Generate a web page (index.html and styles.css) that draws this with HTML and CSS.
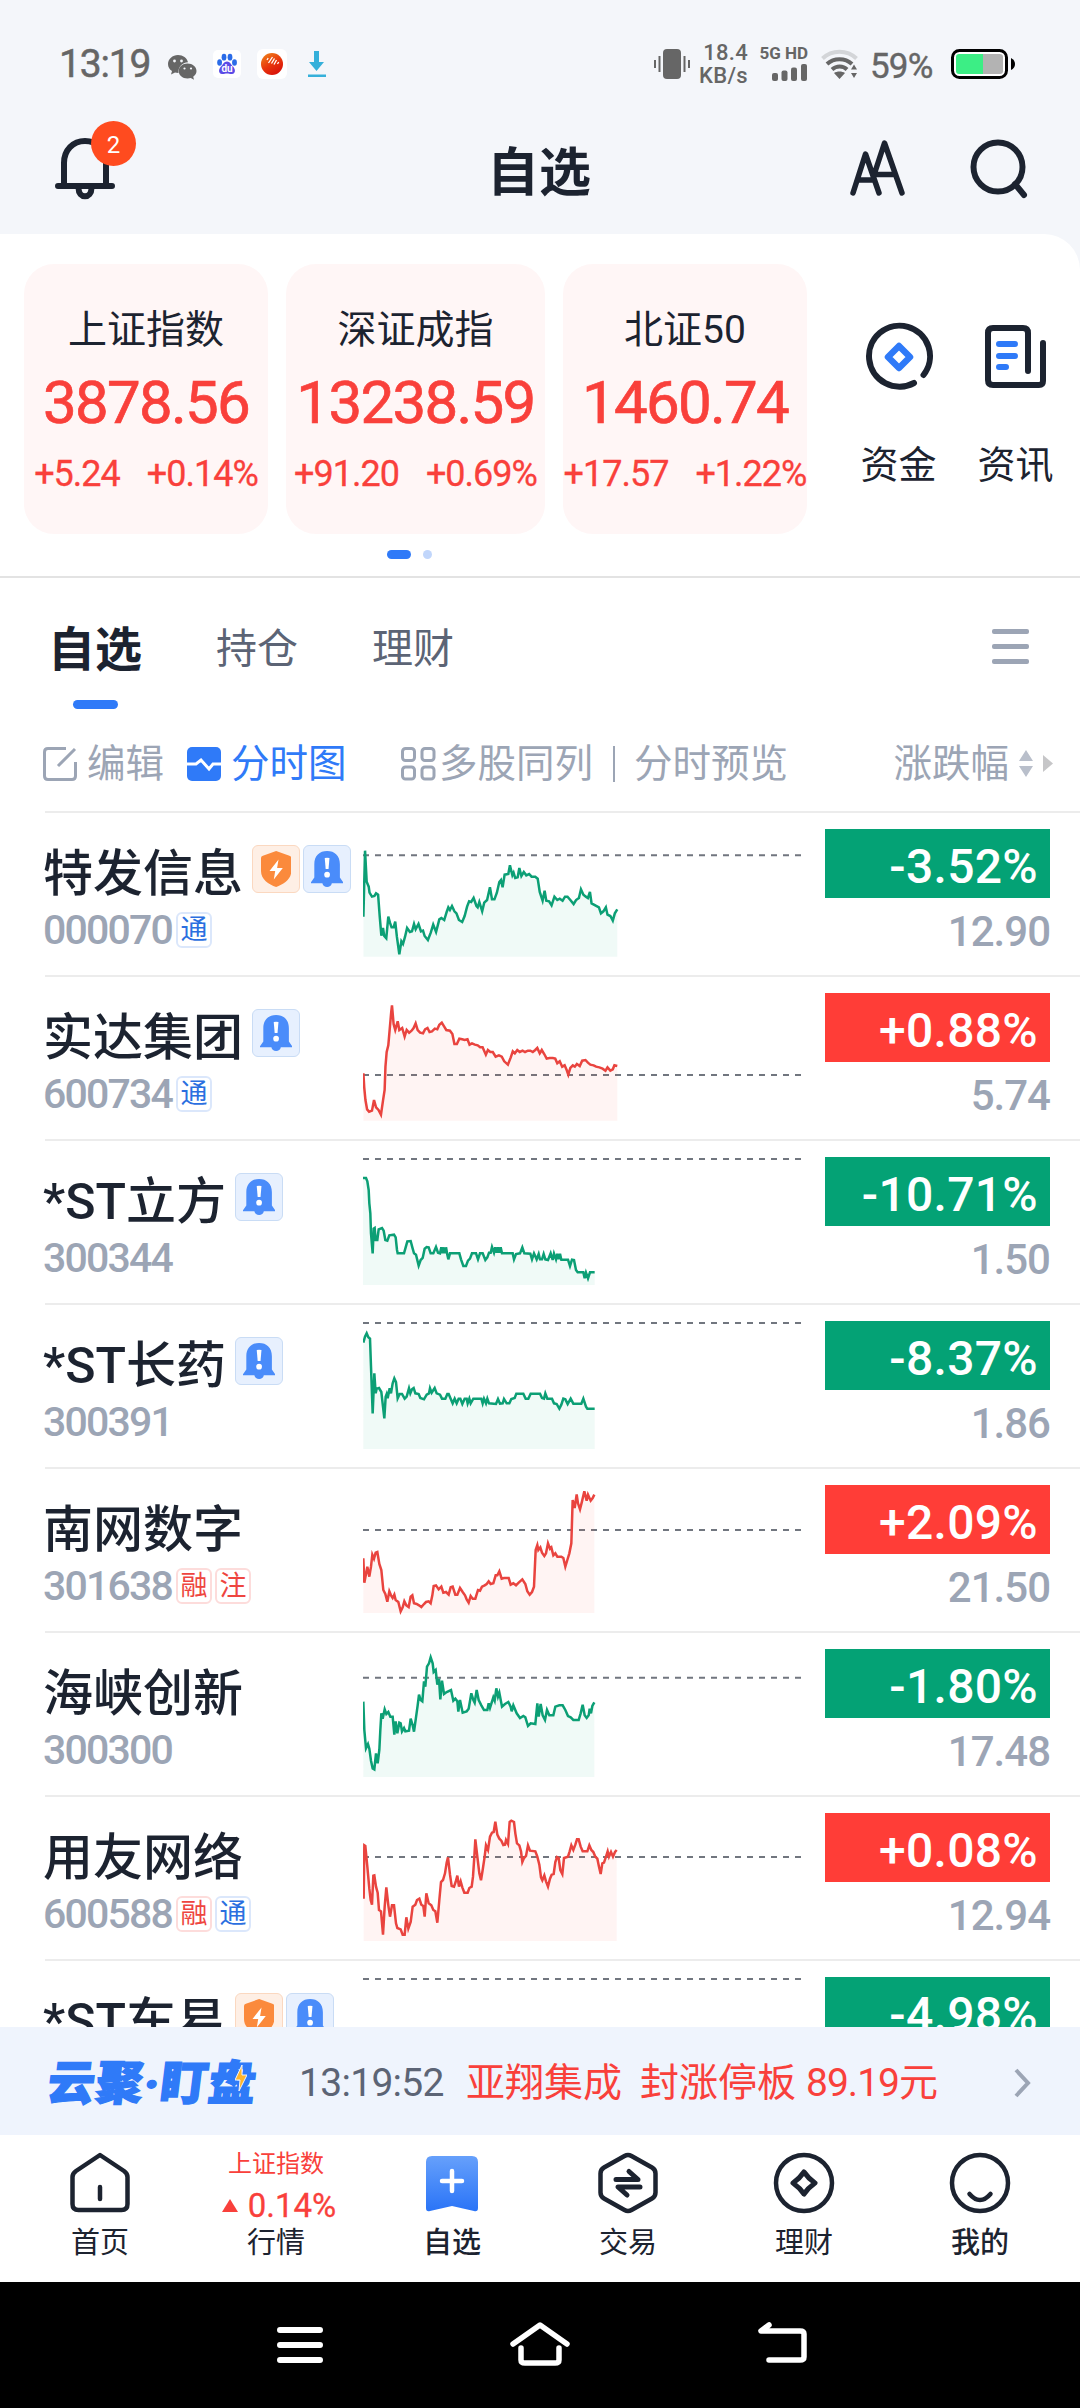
FILE: index.html
```html
<!DOCTYPE html>
<html lang="zh-CN">
<head>
    <meta charset="UTF-8">
    <meta name="viewport" content="width=device-width, initial-scale=1.0">
    <title>自选</title>
    <link rel="stylesheet" href="styles.css">
</head>
<body>
    <div class="status">
        <span class="clock">13:19</span>
        <svg class="wechat" width="30" height="26" viewBox="0 0 30 26">
            <path fill="#666" d="M10 1C4.500 1 0 5 0 10c0 3 1.500 5.500 4 7l-1 3.500 4-2c1 .3 2 .4 3.500.4C10 13 14 8.500 20 8.300 19 4 15 1 10 1z"/>
            <path fill="#666" d="M19.500 9.500c-5 0-8.800 3.400-8.800 7.500s3.800 7.500 8.800 7.500c1.200 0 2.300-.2 3.300-.5l3.200 1.800-.8-3c2-1.400 3.300-3.500 3.300-5.800 0-4.100-4-7.500-9-7.500z"/>
            <g fill="#f4f6fa"><circle cx="6.500" cy="7" r="1.400"/><circle cx="13.500" cy="7" r="1.400"/><circle cx="16.500" cy="14.500" r="1.100"/><circle cx="23" cy="14.500" r="1.100"/></g>
        </svg>
        <svg class="baidu" width="28" height="28" viewBox="0 0 28 28">
            <rect width="28" height="28" rx="5" fill="#fff"/>
            <g fill="#2b6ce8"><ellipse cx="6.600" cy="12.500" rx="2.400" ry="3.200"/><ellipse cx="11" cy="7.200" rx="2.400" ry="3.400"/><ellipse cx="17" cy="7.200" rx="2.400" ry="3.400"/><ellipse cx="21.500" cy="12.500" rx="2.400" ry="3.200"/></g>
            <path fill="#5b4be6" d="M14 11.500c3 0 4 3 6 5 2.500 2.500 3 7-1 7.500-2 .2-3-.5-5-.5s-3 .7-5 .5c-4-.5-3.500-5-1-7.500 2-2 3-5 6-5z"/>
            <text x="14" y="22" class="du">du</text>
        </svg>
        <svg class="cmb" width="30" height="30" viewBox="0 0 30 30">
            <defs><linearGradient id="ball" x1="0" y1="0" x2=".6" y2="1"><stop offset="0" stop-color="#f08a1c"/><stop offset=".6" stop-color="#e8350c"/><stop offset="1" stop-color="#d9140a"/></linearGradient></defs>
            <rect width="30" height="30" rx="6" fill="#fff"/>
            <circle cx="15" cy="15" r="11" fill="url(#ball)"/>
            <path stroke="#fff" stroke-width="1.300" d="M10 11l1.200-2M11.500 14l4-6M14.500 14.500l3-5M17 15.500l2.500-4.500M20.500 15l1.200-2"/>
        </svg>
        <svg class="down-icon" width="20" height="28" viewBox="0 0 20 28">
            <path fill="#35b0da" d="M7 1h5v11h5L9.500 21 2 12h5zM1 24.500h18v2.500H1z"/>
        </svg>

        <svg class="vibrate" width="36" height="30" viewBox="0 0 36 30">
            <rect x="9" width="18" height="30" rx="4" fill="#666"/>
            <path stroke="#666" stroke-width="2" d="M1 11v8M5.500 7v16M30.500 7v16M35 11v8"/>
        </svg>
        <div class="speed"><span>18.4</span><span>KB/s</span></div>
        <div class="signal">
            <span>5G HD</span>
            <svg width="36" height="18" viewBox="0 0 36 18"><g fill="#666"><rect y="9" width="6" height="8" rx="2"/><rect x="9.500" y="6.500" width="6" height="10.500" rx="2"/><rect x="19" y="3.500" width="6" height="13.500" rx="2"/><rect x="29" y="0" width="6" height="17" rx="2"/></g></svg>
        </div>
        <svg class="wifi" width="38" height="30" viewBox="0 0 38 30">
            <g fill="none" stroke="#666" stroke-width="4">
                <path stroke="#d3d5d8" d="M1.500 9.500C11 .5 26 .5 35.500 9.500"/>
                <path d="M6 15C13 8.500 24 8.500 31 15"/>
                <path d="M11 20.500c4.500-4 11-4 15 0"/>
            </g>
            <path fill="#666" d="M13 24c3-2 8-2 11 0l-5.500 6zM30 20.500l3-5 3 5zM30 24l3 5 3-5z"/>
        </svg>
        <span class="percent">59%</span>
        <svg class="battery" width="65" height="30" viewBox="0 0 65 30">
            <rect x="1.500" y="1.500" width="54" height="27" rx="7" fill="#fff" stroke="#000" stroke-width="3"/>
            <path fill="#3cee85" d="M8 5h24v20H8q-3 0-3-3V8q0-3 3-3z"/>
            <path fill="#b3b3b3" d="M32 5h17q3 0 3 3v14q0 3-3 3H32z"/>
            <path d="M60 9q4 2 4 6t-4 6z"/>
        </svg>
    </div>

    <header class="header">
        <div class="bell">
            <svg width="60" height="62" viewBox="0 0 60 62" fill="none" stroke="#1c2330" stroke-width="6" stroke-linecap="round">
                <path d="M9 47V25C9 12 18 3 30 3s21 9 21 22v22M3 48h54"/>
                <path d="M23.500 50c0 11 13 11 13 0"/>
            </svg>
            <span class="badge">2</span>
        </div>
        <h1>自选</h1>
        <svg class="font-size" width="56" height="58" viewBox="0 0 56 58" fill="none" stroke="#1c2330" stroke-width="5.500" stroke-linecap="round" stroke-linejoin="round">
            <path d="M3 54L15.500 15 29 54M9 41h15M24 36L34.500 4 52 54M25 35.500h20"/>
        </svg>
        <svg class="search" width="62" height="62" viewBox="0 0 62 62" fill="none" stroke="#1c2330" stroke-width="6" stroke-linecap="round">
            <circle cx="30" cy="30" r="24.500"/><path d="M47 47l9 11"/>
        </svg>
    </header>

    <main class="panel">
        <section class="indexes">
            <div class="card">
                <span class="card-name">上证指数</span>
                <span class="card-value">3878.56</span>
                <span class="card-change"><span>+5.24</span><span>+0.14%</span></span>
            </div>
            <div class="card card-wide">
                <span class="card-name">深证成指</span>
                <span class="card-value">13238.59</span>
                <span class="card-change"><span>+91.20</span><span>+0.69%</span></span>
            </div>
            <div class="card">
                <span class="card-name">北证50</span>
                <span class="card-value">1460.74</span>
                <span class="card-change"><span>+17.57</span><span>+1.22%</span></span>
            </div>
            <div class="shortcut">
                <svg width="70" height="70" viewBox="0 0 70 70" fill="none" stroke-width="6" stroke-linecap="round">
                    <path stroke="#1c2330" d="M50 61A30.500 30.500 0 1 1 59.500 53"/>
                    <path stroke="#2f7af8" stroke-width="6.500" stroke-linejoin="round" d="M35 24l11 11-11 11-11-11z"/>
                </svg>
                <span>资金</span>
            </div>
            <div class="shortcut">
                <svg width="70" height="70" viewBox="0 0 70 70" fill="none" stroke-width="6" stroke-linecap="round">
                    <path stroke="#1c2330" d="M47 49V11q0-5-5-5H12q-5 0-5 5v47q0 5 5 5h46q4 0 4-4V21"/>
                    <path stroke="#2f7af8" d="M18 22h16M18 34h16M18 45h7"/>
                </svg>
                <span>资讯</span>
            </div>
        </section>
        <div class="dots"><i class="on"></i><i></i></div>

        <nav class="tabs">
            <a class="active">自选</a>
            <a>持仓</a>
            <a>理财</a>
            <span class="menu"><i></i><i></i><i></i></span>
        </nav>

        <div class="toolbar">
            <svg width="34" height="34" viewBox="0 0 34 34" fill="none" stroke="#9ca5b5" stroke-width="3">
                <path d="M23 1.500H5q-3.500 0-3.500 3.500v24q0 3.500 3.500 3.500h24q3.500 0 3.500-3.500V15M15 19L32 2"/>
            </svg>
            <span class="edit">编辑</span>
            <svg width="34" height="34" viewBox="0 0 34 34">
                <rect width="34" height="34" rx="5" fill="#2f7af8"/>
                <path fill="none" stroke="#fff" stroke-width="3" d="M0 17h9l5-4 8 9 4-5h8"/>
            </svg>
            <span class="minute">分时图</span>
            <svg width="35" height="34" viewBox="0 0 35 34" fill="none" stroke="#9ca5b5" stroke-width="3">
                <rect x="1.500" y="1.500" width="12" height="12" rx="3"/><rect x="21" y="1.500" width="12" height="12" rx="3"/>
                <rect x="1.500" y="20" width="12" height="12" rx="3"/><rect x="21" y="20" width="12" height="12" rx="3"/>
            </svg>
            <span class="multi">多股同列</span>
            <i class="split"></i>
            <span>分时预览</span>
            <span class="sort">涨跌幅</span>
            <svg class="arrows" width="36" height="28" viewBox="0 0 36 28">
                <path fill="#b9bfcb" d="M1 11L8 0l7 11zM1 16l7 11 7-11z"/><path fill="#c6c6c8" d="M25 5v17l10-8.500z"/>
            </svg>
        </div>

        <div class="list" id="stockList">
            <!-- Rows will be populated here -->
        </div>
    </main>

    <div class="ticker">
        <span class="logo"><b>云聚·盯盘</b><svg width="12" height="26" viewBox="0 0 12 26"><path fill="#ffb52b" stroke="#eff4fd" stroke-width="1" d="M7 0L0 15h5L4 26l8-16H7z"/></svg></span>
        <span class="time">13:19:52</span>
        <span class="news">亚翔集成</span>
        <span class="news">封涨停板</span>
        <span class="news deal">89.19元</span>
        <svg width="18" height="30" viewBox="0 0 18 30" fill="none" stroke="#9ca5b5" stroke-width="4"><path d="M2 2l12 13L2 28"/></svg>
    </div>

    <nav class="bottom-nav">
        <a>
            <svg width="64" height="64" viewBox="0 0 64 64" fill="none" stroke="#1c2330" stroke-width="4.500" stroke-linecap="round" stroke-linejoin="round">
                <path d="M32 4L8 20q-3.500 2.500-3.500 6v27q0 6 6 6h43q6 0 6-6V26q0-3.500-3.500-6zM32 36v12"/>
            </svg>
            <span>首页</span>
        </a>
        <a class="market">
            <div class="mini"><b>上证指数</b><em><svg width="16" height="13" viewBox="0 0 16 13"><path fill="#f9403b" d="M8 0l8 13H0z"/></svg>0.14%</em></div>
            <span>行情</span>
        </a>
        <a class="selected">
            <svg width="64" height="64" viewBox="0 0 64 64">
                <defs><linearGradient id="mark" x1="0" y1="0" x2="0" y2="1"><stop offset="0" stop-color="#66a0fb"/><stop offset="1" stop-color="#2a74f7"/></linearGradient></defs>
                <path fill="url(#mark)" d="M12 5h40q6 0 6 6v46q0 4-4 3L32 55 10 60q-4 1-4-3V11q0-6 6-6z"/>
                <path stroke="#fff" stroke-width="4.500" stroke-linecap="round" d="M32 20v20M22 30h20"/>
            </svg>
            <span>自选</span>
        </a>
        <a>
            <svg width="64" height="64" viewBox="0 0 64 64" fill="none" stroke="#1c2330" stroke-width="4.500" stroke-linecap="round" stroke-linejoin="round">
                <path d="M28.500 5q3.500-2 7 0L56 16.500q3.500 2 3.500 6v19q0 4-3.500 6L35.500 59q-3.500 2-7 0L8 47.500q-3.500-2-3.500-6v-19q0-4 3.500-6z"/>
                <path stroke-width="5" d="M20 28.500h22l-9-8M44 36H22l9 8"/>
            </svg>
            <span>交易</span>
        </a>
        <a>
            <svg width="64" height="64" viewBox="0 0 64 64" fill="none" stroke="#1c2330" stroke-width="4.500" stroke-linejoin="round">
                <circle cx="32" cy="32" r="28"/><path stroke-width="5" d="M32 21q4 6 11 11-7 5-11 11-4-6-11-11 7-5 11-11z"/>
            </svg>
            <span>理财</span>
        </a>
        <a class="mine">
            <svg width="64" height="64" viewBox="0 0 64 64" fill="none" stroke="#1c2330" stroke-width="4.500" stroke-linecap="round">
                <circle cx="32" cy="32" r="28"/><path d="M21.500 43q10.500 12 21 0"/>
            </svg>
            <span>我的</span>
        </a>
    </nav>

    <div class="system-nav">
        <svg width="46" height="48" viewBox="0 0 46 48" stroke="#fff" stroke-width="6" stroke-linecap="round"><path d="M3 10h40M3 25h40M3 40h40"/></svg>
        <svg width="60" height="48" viewBox="0 0 60 48" fill="none" stroke="#fff" stroke-width="5.500" stroke-linecap="round" stroke-linejoin="round"><path d="M3 24L30 5l27 19"/><path d="M11 28v12q0 3 4 3h30q4 0 4-3V28"/></svg>
        <svg width="50" height="48" viewBox="0 0 50 48" fill="none" stroke="#fff" stroke-width="5.500" stroke-linecap="round" stroke-linejoin="round"><path d="M12 5L4 11h39q4 0 4 3v23q0 3-4 3H12"/></svg>
    </div>

    <script>
        // box: viewBox of the chart, base: yesterday's close line, bottom: bottom of the filled area
        const stocks = [
            { name: '特发信息', code: '000070', marks: ['shield', 'alarm'], tags: ['通'], change: '-3.52%', price: '12.90',
              box: '889 39 1078 486', base: 166, bottom: 470,
              points: '890,350 894,152 898,245 903,260 905,278 911,290 917,288 921,280 926,284 930,350 934,407 938,384 941,408 946,415 951,350 955,368 959,382 964,382 968,365 972,410 978,463 983,424 987,432 992,410 997,384 1004,396 1009,394 1014,372 1018,388 1025,372 1031,394 1036,392 1040,408 1048,420 1055,398 1061,374 1068,396 1076,358 1081,354 1088,360 1094,336 1098,322 1102,330 1107,318 1113,334 1118,340 1124,360 1132,366 1138,348 1144,320 1149,304 1154,306 1160,294 1167,318 1170,322 1174,306 1181,334 1186,308 1193,300 1200,262 1205,298 1211,298 1217,278 1223,246 1227,240 1231,262 1236,224 1245,222 1249,196 1255,226 1258,218 1262,234 1268,232 1272,204 1277,228 1283,216 1289,226 1296,222 1302,230 1311,230 1317,236 1322,276 1329,302 1334,272 1338,302 1345,304 1351,316 1358,290 1365,300 1371,296 1378,302 1384,290 1390,290 1397,300 1405,312 1411,300 1418,294 1423,268 1429,284 1435,290 1440,294 1445,276 1449,310 1458,316 1467,322 1472,340 1478,334 1484,322 1488,344 1495,348 1501,362 1506,340 1512,328' },
            { name: '实达集团', code: '600734', marks: ['alarm'], tags: ['通'], change: '+0.88%', price: '5.74',
              box: '889 531 1078 486', base: 825, bottom: 962,
              points: '890,820 892,862 895,900 899,928 904,935 911,932 916,900 921,922 927,930 933,944 938,902 942,870 944,800 947,756 951,736 955,680 958,638 960,616 964,672 968,690 974,664 978,690 985,684 991,710 996,690 1002,698 1008,692 1013,684 1018,670 1023,690 1029,698 1036,700 1041,688 1047,684 1052,696 1058,694 1065,686 1071,688 1076,674 1082,668 1088,680 1093,690 1102,692 1108,702 1113,732 1119,732 1125,716 1132,718 1138,720 1145,718 1150,734 1156,730 1163,734 1170,736 1176,742 1182,742 1190,764 1195,750 1201,756 1207,756 1214,770 1222,766 1229,770 1235,784 1244,794 1251,772 1256,754 1261,760 1267,750 1273,756 1280,752 1286,756 1293,752 1299,752 1305,756 1311,750 1316,744 1322,760 1327,750 1333,762 1339,776 1346,774 1354,774 1360,776 1365,790 1371,784 1377,800 1383,796 1388,810 1392,824 1397,804 1403,796 1408,800 1413,792 1420,798 1426,782 1434,780 1440,788 1446,794 1454,796 1460,800 1468,802 1476,806 1483,812 1488,802 1495,812 1501,808 1505,796 1512,798' },
            { name: '*ST立方', code: '300344', marks: ['alarm'], tags: [], change: '-10.71%', price: '1.50',
              box: '69 3 1320 486', base: 57, bottom: 435,
              points: '69,114 78,114 82,124 86,150 88,190 91,220 93,280 98,340 101,266 104,264 107,300 112,300 116,268 126,264 131,272 136,300 142,302 148,286 162,284 167,292 171,330 173,340 192,340 197,322 202,304 212,303 217,322 222,340 228,344 236,377 242,360 248,354 254,326 260,321 266,322 272,340 280,340 288,321 294,338 300,340 304,322 308,340 312,322 315,340 318,322 322,344 325,358 330,340 358,340 363,358 370,378 378,378 384,362 390,356 396,340 408,340 414,358 420,340 428,340 436,360 442,352 447,338 452,338 456,321 462,338 466,322 470,338 474,322 478,338 482,322 486,340 518,340 522,358 528,342 540,340 547,322 553,340 571,341 576,358 582,340 590,358 596,342 600,358 606,358 611,342 616,358 624,360 632,340 638,360 642,341 648,358 652,341 656,358 660,341 664,359 684,359 690,378 696,359 702,360 708,390 713,397 730,397 734,415 738,398 744,415 750,397 764,397' },
            { name: '*ST长药', code: '300391', marks: ['alarm'], tags: [], change: '-8.37%', price: '1.86',
              box: '69 495 1320 486', base: 549, bottom: 927,
              points: '70,608 75,590 80,580 85,592 90,596 93,680 98,820 103,700 107,760 110,746 117,744 124,756 129,800 133,835 137,770 140,762 143,775 149,745 153,760 158,730 163,715 168,726 173,775 179,762 186,762 194,776 200,770 207,745 211,760 216,748 221,744 226,760 236,762 241,774 252,778 260,764 267,760 270,745 275,758 284,744 290,760 300,764 306,776 316,776 322,762 326,762 332,776 338,790 344,776 350,790 356,776 361,776 367,792 374,776 380,776 383,790 388,776 392,790 400,776 424,776 428,790 432,776 438,790 442,776 447,790 468,792 474,777 480,791 488,790 492,777 500,790 508,790 514,777 524,774 529,761 550,761 557,776 565,776 572,761 600,761 606,774 612,776 616,760 622,776 636,776 642,790 650,792 658,806 664,794 670,776 676,778 683,792 692,776 700,791 724,791 730,776 738,800 742,806 764,806' },
            { name: '南网数字', code: '301638', marks: [], tags: ['融', '注'], change: '+2.09%', price: '21.50',
              box: '69 -3 1320 486', base: 180, bottom: 429,
              points: '70,265 73,338 78,312 82,290 88,320 93,290 97,254 102,266 107,248 112,246 118,282 124,300 130,360 136,372 142,395 148,364 153,376 158,384 163,374 167,390 175,396 182,424 188,412 193,394 199,406 206,411 212,380 217,376 222,400 230,402 237,406 244,411 252,402 258,396 266,394 272,400 277,376 281,348 288,346 296,358 304,350 310,368 318,366 326,374 332,352 338,350 346,374 352,374 360,354 368,366 375,376 380,388 386,398 392,378 398,386 406,386 414,360 420,362 426,350 434,346 440,342 446,334 452,342 460,340 467,316 472,316 478,304 485,326 492,324 506,324 512,344 520,340 528,346 536,338 547,328 556,342 562,364 569,374 576,366 582,350 587,240 592,225 595,240 601,232 606,248 613,258 618,250 624,220 630,236 634,232 640,256 646,250 652,260 664,260 670,264 676,290 682,270 688,250 694,220 698,90 704,114 710,73 714,100 720,118 726,94 733,64 740,92 744,74 752,92 758,84 763,74' },
            { name: '海峡创新', code: '300300', marks: [], tags: [], change: '-1.80%', price: '17.48',
              box: '69 489 1320 486', base: 623, bottom: 921,
              points: '70,695 73,780 78,835 84,822 88,836 93,872 98,895 103,898 108,850 113,880 118,840 121,780 124,730 128,746 134,718 139,732 145,726 151,740 158,740 163,794 167,754 172,790 178,758 182,760 186,784 192,774 196,784 207,782 212,746 218,766 222,785 228,742 233,706 237,674 242,690 247,694 252,634 256,650 261,590 267,580 272,562 278,580 281,606 287,600 292,644 297,626 301,688 306,632 312,672 320,666 333,660 340,692 346,686 352,694 355,725 360,690 368,728 380,724 386,716 394,670 400,690 404,698 410,660 416,690 424,706 432,720 442,720 446,700 450,714 455,698 460,682 464,692 469,655 474,680 478,668 486,710 495,702 505,696 512,710 515,724 520,706 530,730 540,744 550,738 556,742 564,768 572,760 586,762 592,700 596,740 602,702 608,736 615,750 621,720 628,736 640,736 646,710 658,706 668,706 676,720 684,738 692,742 700,750 716,750 722,730 728,704 734,736 740,744 746,736 749,716 753,730 757,708 763,697' },
            { name: '用友网络', code: '600588', marks: [], tags: ['融', '通'], change: '+0.08%', price: '12.94',
              box: '69 21 1320 486', base: 201, bottom: 453,
              points: '71,326 73,166 76,168 82,230 88,296 92,330 96,344 100,257 103,256 108,290 113,308 117,360 123,364 129,434 134,350 139,292 145,346 150,380 156,346 162,346 168,400 172,414 182,418 188,434 194,434 199,382 205,416 212,396 218,350 226,344 231,330 238,326 244,344 250,348 254,380 259,310 266,340 274,346 280,360 286,364 292,398 298,330 303,276 309,270 315,250 320,218 324,202 330,254 335,288 342,290 347,276 352,257 357,290 362,274 367,292 373,308 383,308 388,294 395,290 399,260 403,200 406,148 412,200 418,250 423,271 428,240 434,200 438,166 444,180 450,140 456,128 461,126 466,95 472,134 478,146 484,152 490,165 495,164 498,150 504,162 509,96 514,92 522,96 526,130 531,160 538,166 543,184 547,216 552,204 558,198 564,166 570,182 586,184 592,200 598,224 603,262 607,271 613,256 618,274 624,290 630,266 635,254 641,252 646,216 651,201 656,204 661,240 667,252 672,204 684,200 689,184 694,166 700,180 706,164 711,148 716,148 722,170 728,184 742,184 748,166 754,180 760,186 766,200 772,206 777,230 782,252 787,220 792,218 798,200 803,184 807,200 813,186 819,200 825,186 830,180' },
            { name: '*ST车易', code: '', marks: ['shield', 'alarm'], tags: [], change: '-4.98%', price: '',
              box: '69 513 1320 486', base: 567, bottom: 0, points: '' }
        ];

        const icons = {
            shield: '<svg viewBox="0 0 32 38"><path fill="#fb8a3c" d="M16 0l14 5q2 .5 2 2.500V21c0 9-8 14-16 17C8 35 0 30 0 21V7.500Q0 5.500 2 5z"/><path fill="#fff" d="M18.500 9L9 21h6l-1.500 9L23 18h-6z"/></svg>',
            alarm: '<svg viewBox="0 0 34 38"><path fill="#4a8cfa" d="M17 0C9 0 3.500 5 3.500 14v14L0 33v1h12q1 4 5 4t5-4h12v-1l-3.500-5V14C30.500 5 25 0 17 0z"/><path fill="#fff" d="M14.500 7.500q2.500-1 5 0l-1 11.500h-3z"/><circle cx="17" cy="25" r="3" fill="#fff"/></svg>'
        };

        const list = document.getElementById('stockList');
        stocks.forEach(item => {
            const dir = item.change[0] === '+' ? 'up' : 'down';
            const marks = item.marks.map(m => `<i class="mark ${m}">${icons[m]}</i>`).join('');
            const tags = item.tags.map(t => `<i class="tag ${t === '通' ? 'blue' : 'red'}">${t}</i>`).join('');
            let area = '';
            if (item.points) {
                const pts = item.points.split(' ');
                const first = pts[0].split(',')[0];
                const last = pts[pts.length - 1].split(',')[0];
                area = `<polygon class="area" points="${first},${item.bottom} ${item.points} ${last},${item.bottom}"/>
                        <polyline class="line" points="${item.points}"/>`;
            }
            const box = item.box.split(' ').map(Number);
            const row = document.createElement('div');
            row.className = 'row ' + dir;
            row.innerHTML = `
                <div class="stock">
                    <div class="name"><span>${item.name}</span>${marks}</div>
                    <div class="code"><span>${item.code}</span>${tags}</div>
                </div>
                <svg class="chart" viewBox="${item.box}" preserveAspectRatio="none">
                    <line class="base" x1="${box[0]}" x2="${box[0] + box[2]}" y1="${item.base}" y2="${item.base}"/>
                    ${area}
                </svg>
                <div class="quote">
                    <div class="change">${item.change}</div>
                    <div class="price">${item.price}</div>
                </div>`;
            list.appendChild(row);
        });
    </script>
</body>
</html>
```
FILE: styles.css
```css
* {
    box-sizing: border-box;
}

body {
    margin: 0;
    width: 1080px;
    height: 2408px;
    overflow: hidden;
    display: flex;
    flex-direction: column;
    background-color: #f4f6fa;
    font-family: Roboto, "Noto Sans CJK SC", sans-serif;
    color: #1c2330;
    line-height: 1;
}

svg {
    display: block;
    flex: none;
}

i, em {
    font-style: normal;
}

/* status bar */
.status {
    height: 86px;
    padding: 42px 60px 0 59px;
    display: flex;
    align-items: center;
    flex: none;
    color: #666;
}

.clock {
    width: 109px;
    font-size: 39px;
    letter-spacing: -1.2px;
    -webkit-text-stroke: 0.5px;
}

.wechat {
    margin-top: 5px;
}

.baidu {
    margin-left: 15px;
}

.du {
    fill: #fff;
    font-size: 10px;
    font-weight: bold;
    text-anchor: middle;
}

.cmb {
    margin-left: 16px;
}

.down-icon {
    margin-left: 20px;
}

.vibrate {
    margin-left: auto;
}

.speed {
    width: 58px;
    display: flex;
    flex-direction: column;
    align-items: flex-end;
    gap: 1px;
    font-size: 22px;
    font-weight: 500;
    letter-spacing: 0.3px;
}

.signal {
    width: 60px;
    margin-top: -2px;
    display: flex;
    flex-direction: column;
    align-items: flex-end;
    gap: 2px;
    font-size: 17px;
    font-weight: bold;
}

.signal span {
    white-space: nowrap;
}

.wifi {
    margin-left: 13px;
}

.percent {
    width: 81px;
    margin: 5px 0 0 11px;
    font-size: 35px;
    letter-spacing: -0.8px;
    -webkit-text-stroke: 0.4px;
}

.battery {
    margin-right: 4px;
}

/* header */
.header {
    height: 148px;
    display: flex;
    align-items: center;
    flex: none;
    padding: 14px 50px 0 55px;
}

.bell {
    position: relative;
    margin-top: 3px;
}

.badge {
    position: absolute;
    left: 36px;
    top: -17px;
    width: 45px;
    height: 45px;
    border-radius: 50%;
    background-color: #ff4b1f;
    color: #fff;
    font-size: 24px;
    line-height: 49px;
    text-align: center;
}

.header h1 {
    margin: 13px 0 0 372px;
    font-size: 52px;
    font-weight: bold;
}

.font-size {
    margin: 2px 0 0 auto;
}

.search {
    margin: 2px 0 0 62px;
}

/* indexes */
.panel {
    height: 1793px;
    flex: none;
    overflow: hidden;
    background-color: #fff;
    border-top-right-radius: 36px;
}

.indexes {
    padding: 30px 0 0 24px;
    display: flex;
}

.card {
    width: 244px;
    height: 270px;
    margin-right: 18px;
    padding-top: 47px;
    display: flex;
    flex-direction: column;
    align-items: center;
    flex: none;
    border-radius: 30px;
    background-color: #fff6f6;
    color: #f9403b;
}

.card-wide {
    width: 259px;
}

.card-name {
    font-size: 39px;
    color: #1c2330;
}

.card-value {
    margin-top: 23px;
    font-size: 60px;
    letter-spacing: -1.7px;
    -webkit-text-stroke: 0.7px;
}

.card-change {
    margin-top: 23px;
    display: flex;
    gap: 27px;
    font-size: 36px;
    letter-spacing: -1px;
    white-space: nowrap;
    -webkit-text-stroke: 0.3px;
}

.shortcut {
    width: 117px;
    padding-top: 58px;
    display: flex;
    flex-direction: column;
    align-items: center;
    gap: 54px;
    font-size: 38px;
}

.shortcut:nth-child(4) {
    margin-left: 15px;
}

.dots {
    height: 44px;
    padding: 16px 0 0 387px;
    display: flex;
    gap: 12px;
    border-bottom: 2px solid #e3e3e3;
}

.dots i {
    width: 9px;
    height: 9px;
    border-radius: 5px;
    background-color: #c1d6fb;
}

.dots .on {
    width: 24px;
    background-color: #2f7af8;
}

/* tabs */
.tabs {
    height: 139px;
    padding: 4px 51px 0 48px;
    display: flex;
    align-items: center;
    font-size: 41px;
    color: #5c6475;
}

.tabs a {
    position: relative;
    width: 82px;
    margin-left: 74px;
}

.tabs .active {
    width: 94px;
    margin-left: 0;
    font-size: 47px;
    font-weight: bold;
    color: #1c2330;
}

.tabs .active::after {
    content: "";
    position: absolute;
    left: 25px;
    top: 74px;
    width: 45px;
    height: 9px;
    border-radius: 5px;
    background-color: #2f7af8;
}

.menu {
    width: 37px;
    margin: -7px 0 0 auto;
    display: flex;
    flex-direction: column;
    gap: 10px;
}

.menu i {
    height: 5px;
    border-radius: 2px;
    background-color: #9ca5b5;
}

.toolbar {
    height: 94px;
    padding: 0 26px 0 43px;
    display: flex;
    align-items: center;
    font-size: 38.5px;
    color: #9ca5b5;
    white-space: nowrap;
}

.edit {
    width: 99px;
    padding-left: 10px;
}

.edit + svg {
    margin-left: 11px;
}

.minute {
    width: 168px;
    padding-left: 10px;
    margin-right: 12px;
    color: #2f7af8;
}

.multi {
    margin-left: 3px;
}

.split {
    width: 2px;
    height: 36px;
    margin: 0 19px 0 20px;
    background-color: #9ca5b5;
}

.sort {
    margin-left: auto;
}

.arrows {
    margin-left: 9px;
}

/* stock list */
.row {
    height: 164px;
    margin-left: 45px;
    display: flex;
    border-top: 2px solid #ececec;
}

.stock {
    width: 320px;
    margin-left: -2px;
    padding-top: 36px;
}

.name {
    height: 50px;
    display: flex;
    align-items: center;
    font-size: 50px;
    font-weight: 500;
    white-space: nowrap;
}

.mark {
    width: 48px;
    height: 48px;
    margin: -11px 0 0 3px;
    display: flex;
    align-items: center;
    justify-content: center;
    flex: none;
    border: 1px solid #c9dcf5;
    border-radius: 6px;
    background-color: #e7f0fe;
}

.mark.shield {
    border-color: #fbd8c0;
    background-color: #feefe5;
}

.name span + .mark {
    margin-left: 9px;
}

.mark svg {
    height: 36px;
}

.code {
    height: 36px;
    margin-top: 13px;
    display: flex;
    align-items: center;
    font-size: 41px;
    font-weight: 500;
    letter-spacing: -1.8px;
    color: #9ca5b5;
}

.tag {
    width: 36px;
    height: 36px;
    margin-left: 4px;
    border: 2px solid;
    border-radius: 6px;
    font-size: 27px;
    font-weight: normal;
    line-height: 32px;
    letter-spacing: 0;
    text-align: center;
}

.tag + .tag {
    margin-left: 3px;
}

.tag.blue {
    color: #2b6fe0;
    border-color: #dbe7fb;
}

.tag.red {
    color: #ee4540;
    border-color: #fddcdb;
}

.chart {
    width: 440px;
    height: 162px;
}

.base {
    stroke: #71767f;
    stroke-width: 2;
    stroke-dasharray: 6 6;
    vector-effect: non-scaling-stroke;
}

.line {
    fill: none;
    stroke: #e9443f;
    stroke-width: 2.5;
    vector-effect: non-scaling-stroke;
}

.area {
    fill: #ff3c37;
    fill-opacity: 0.06;
}

.down .line {
    stroke: #0c9f75;
}

.down .area {
    fill: #04a275;
}

.quote {
    width: 225px;
    margin-left: 22px;
    padding-top: 16px;
}

.change {
    height: 69px;
    padding-right: 12px;
    background-color: #ff3d37;
    color: #fff;
    font-size: 48px;
    font-weight: 500;
    line-height: 75px;
    letter-spacing: 0.3px;
    text-align: right;
}

.down .change {
    background-color: #04a275;
}

.price {
    margin-top: 13px;
    font-size: 42px;
    font-weight: 500;
    letter-spacing: -1px;
    color: #9ca5b5;
    text-align: right;
}

/* news ticker */
.ticker {
    height: 108px;
    padding: 4px 48px 0 48px;
    display: flex;
    align-items: center;
    flex: none;
    background-color: #eff4fd;
    font-size: 39px;
    white-space: nowrap;
}

.logo {
    position: relative;
    width: 251px;
    font-size: 47px;
    color: #2f7af8;
}

.logo b {
    display: inline-block;
    font-weight: 900;
    letter-spacing: 1.2px;
    transform: skewX(-7deg);
    -webkit-text-stroke: 1.5px;
}

.logo svg {
    position: absolute;
    left: 187px;
    top: 5px;
}

.time {
    width: 167px;
    letter-spacing: -0.7px;
    color: #5c6475;
}

.news {
    margin-right: 18px;
    color: #f9403b;
}

.deal {
    margin-left: -8px;
    letter-spacing: -1px;
}

.ticker > svg {
    margin-left: auto;
}

/* bottom navigation */
.bottom-nav {
    height: 147px;
    padding: 0 12px;
    display: flex;
    flex: none;
    background-color: #fff;
}

.bottom-nav a {
    width: 176px;
    padding-top: 16px;
    display: flex;
    flex-direction: column;
    align-items: center;
    font-size: 29px;
}

.bottom-nav a > span {
    margin-top: 14px;
}

.bottom-nav .selected, .bottom-nav .mine {
    font-weight: 500;
}

.mini {
    height: 64px;
    display: flex;
    flex-direction: column;
    align-items: center;
    color: #f9403b;
}

.mini b {
    margin-top: 1px;
    font-size: 24px;
    font-weight: normal;
}

.mini em {
    margin: 13px 0 0 6px;
    display: flex;
    align-items: center;
    gap: 10px;
    font-size: 33px;
    -webkit-text-stroke: 0.3px;
}

.system-nav {
    height: 126px;
    padding: 0 0 3px 3px;
    display: flex;
    align-items: center;
    justify-content: center;
    gap: 187px;
    flex: none;
    background-color: #000;
}
```
